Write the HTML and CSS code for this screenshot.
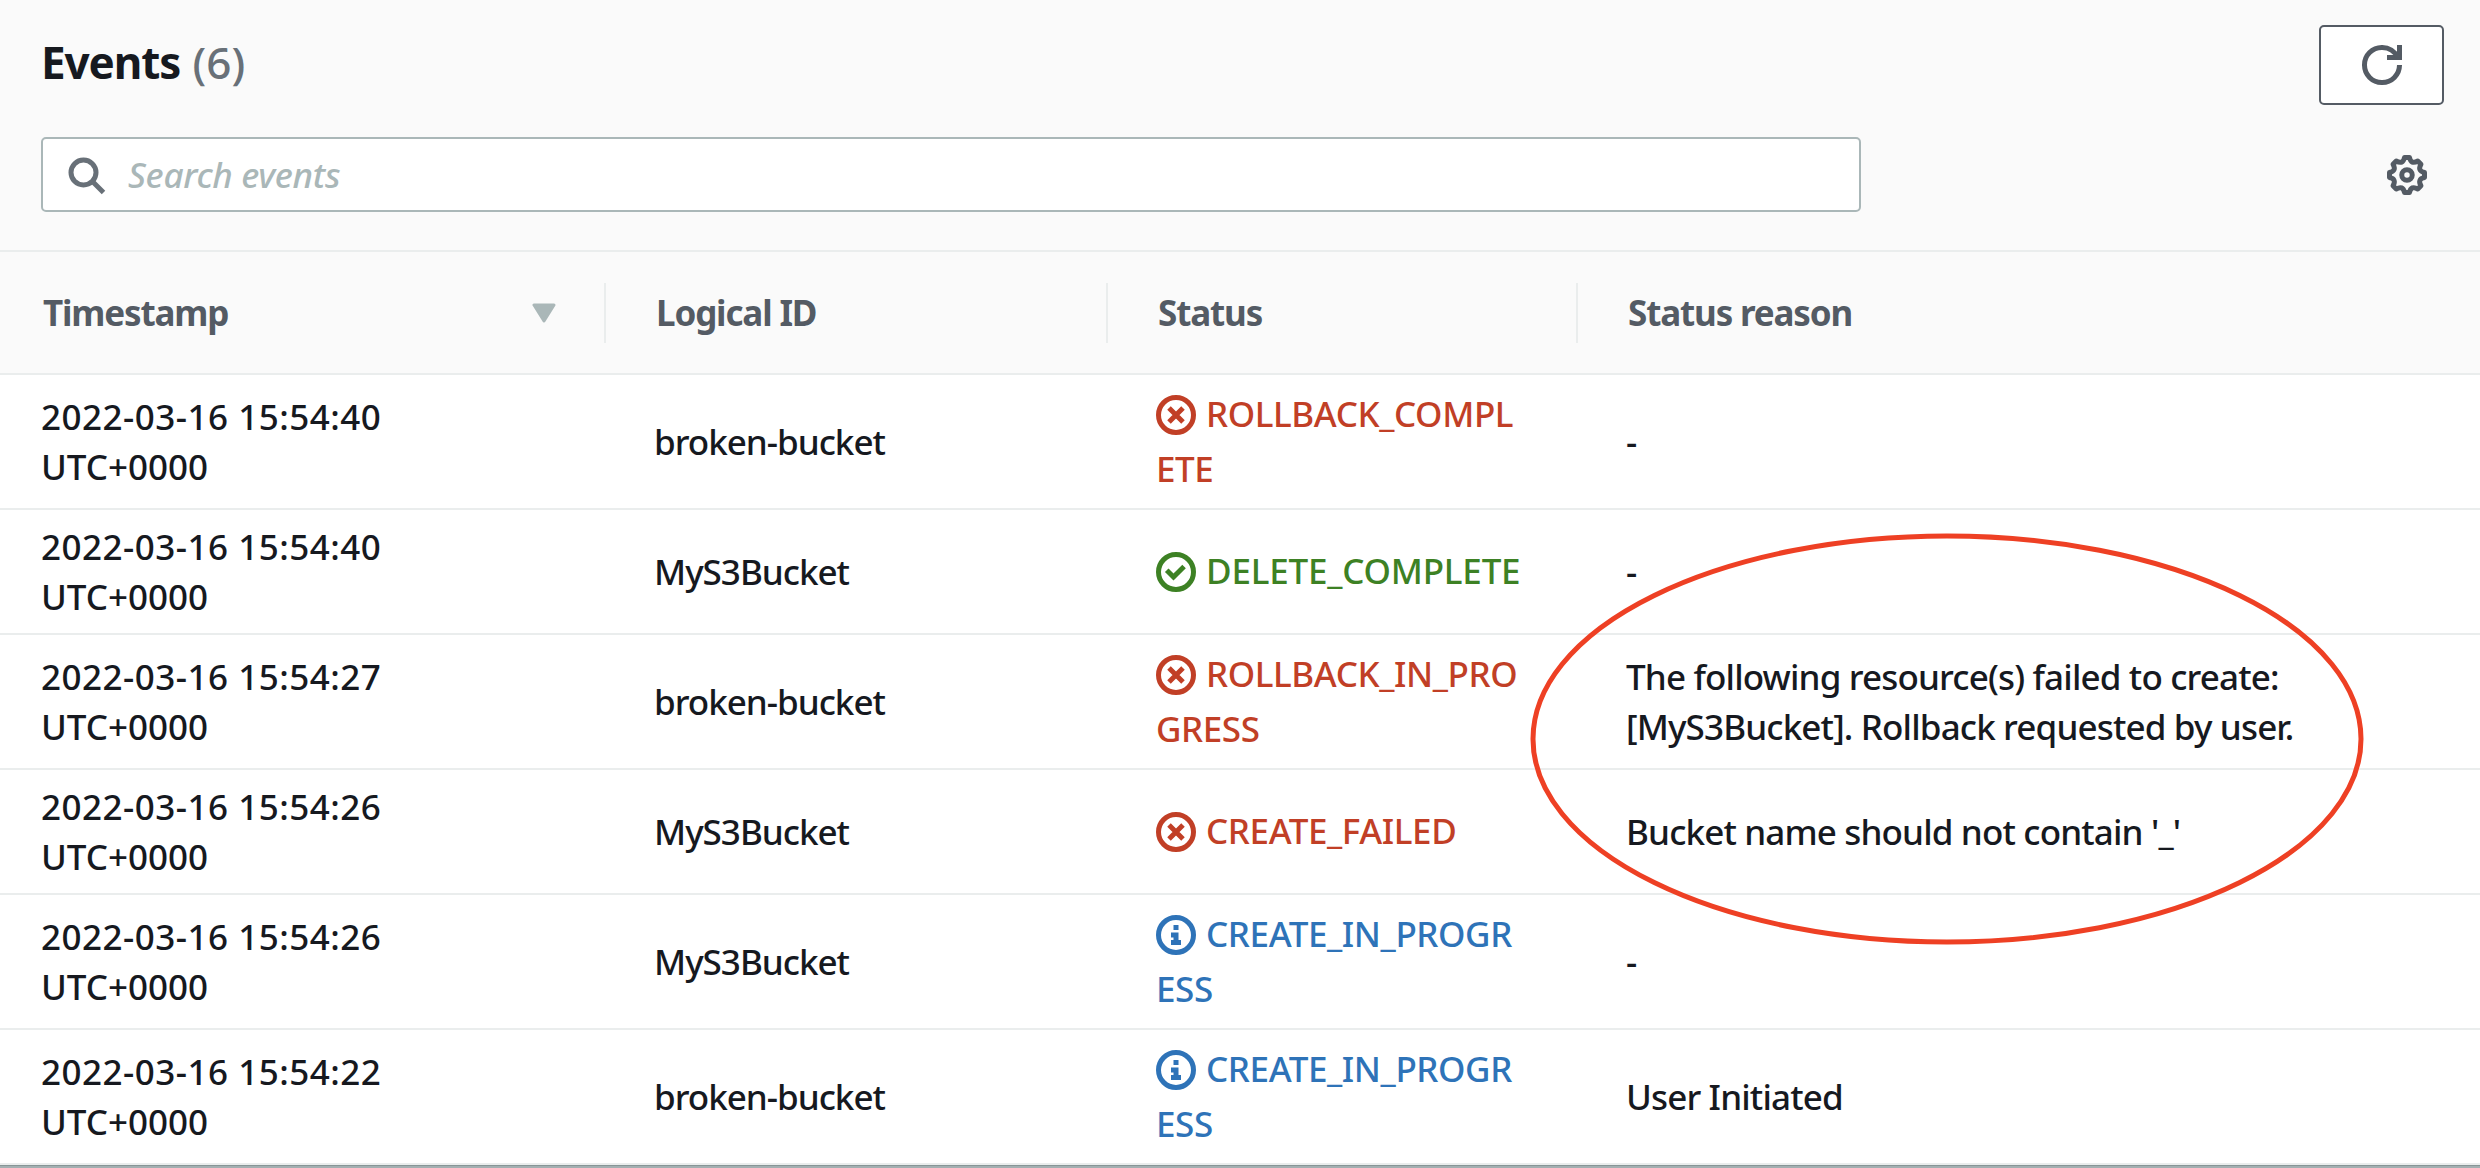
FILE: index.html
```html
<!DOCTYPE html>
<html lang="en">
<head>
<meta charset="utf-8">
<title>Events</title>
<link rel="stylesheet" href="styles.css">
</head>
<body>
<svg class="sprite" aria-hidden="true">
  <symbol id="icon-error" viewBox="0 0 16 16"><circle cx="8" cy="8" r="7"/><path d="M10.8 5.2 5.2 10.8M10.8 10.8 5.2 5.2"/></symbol>
  <symbol id="icon-success" viewBox="0 0 16 16"><circle cx="8" cy="8" r="7"/><path stroke-linecap="square" d="m5 8 2 2 3.521-3.521"/></symbol>
  <symbol id="icon-info" viewBox="0 0 16 16"><circle cx="8" cy="8" r="7"/><path d="M8 11V8H6M10 11H6M8 6V4"/></symbol>
</svg>
<main class="panel">
  <header class="panel-header">
    <div class="title-row">
      <h1 class="title">Events <span class="counter">(6)</span></h1>
      <button class="refresh" aria-label="Refresh">
        <svg class="icon" viewBox="0 0 16 16"><path d="M10 5h5V0"/><path d="M15 8a6.957 6.957 0 0 1-7 7 6.957 6.957 0 0 1-7-7 6.957 6.957 0 0 1 7-7 6.87 6.87 0 0 1 6.3 4"/></svg>
      </button>
    </div>
    <div class="tools-row">
      <label class="search">
        <svg class="icon" viewBox="0 0 16 16"><circle cx="7" cy="7" r="5"/><path d="m15 15-4.5-4.5"/></svg>
        <span class="placeholder">Search events</span>
      </label>
      <svg class="icon gear" viewBox="0 0 16 16"><circle cx="8" cy="8" r="2.1"/><path stroke-linejoin="round" d="M7 1H9Q9.63 3.96 12.31 2.41L13.59 3.69Q12.04 6.37 15 7V9Q12.04 9.63 13.59 12.31L12.31 13.59Q9.63 12.04 9 15H7Q6.37 12.04 3.69 13.59L2.41 12.31Q3.96 9.63 1 9V7Q3.96 6.37 2.41 3.69L3.69 2.41Q6.37 3.96 7 1Z"/></svg>
    </div>
  </header>
  <section class="table">
    <div class="row head">
      <div class="cell">Timestamp<svg class="sort" viewBox="0 0 26 20"><path d="M3 2h20L13 18z"/></svg></div>
      <div class="cell">Logical ID</div>
      <div class="cell">Status</div>
      <div class="cell">Status reason</div>
    </div>
    <div class="row">
      <div class="cell time"><span class="date">2022-03-16 15:54:40</span><br>UTC+0000</div>
      <div class="cell name">broken-bucket</div>
      <div class="cell status error"><div><svg class="icon"><use href="#icon-error"/></svg>ROLLBACK_COMPL<br>ETE</div></div>
      <div class="cell reason">-</div>
    </div>
    <div class="row short">
      <div class="cell time"><span class="date">2022-03-16 15:54:40</span><br>UTC+0000</div>
      <div class="cell name">MyS3Bucket</div>
      <div class="cell status success"><div><svg class="icon"><use href="#icon-success"/></svg>DELETE_COMPLETE</div></div>
      <div class="cell reason">-</div>
    </div>
    <div class="row">
      <div class="cell time"><span class="date">2022-03-16 15:54:27</span><br>UTC+0000</div>
      <div class="cell name">broken-bucket</div>
      <div class="cell status error"><div><svg class="icon"><use href="#icon-error"/></svg>ROLLBACK_IN_PRO<br>GRESS</div></div>
      <div class="cell reason">The following resource(s) failed to create:<br>[MyS3Bucket]. Rollback requested by user.</div>
    </div>
    <div class="row short">
      <div class="cell time"><span class="date">2022-03-16 15:54:26</span><br>UTC+0000</div>
      <div class="cell name">MyS3Bucket</div>
      <div class="cell status error"><div><svg class="icon"><use href="#icon-error"/></svg>CREATE_FAILED</div></div>
      <div class="cell reason">Bucket name should not contain '_'</div>
    </div>
    <div class="row">
      <div class="cell time"><span class="date">2022-03-16 15:54:26</span><br>UTC+0000</div>
      <div class="cell name">MyS3Bucket</div>
      <div class="cell status info"><div><svg class="icon"><use href="#icon-info"/></svg>CREATE_IN_PROGR<br>ESS</div></div>
      <div class="cell reason">-</div>
    </div>
    <div class="row">
      <div class="cell time"><span class="date">2022-03-16 15:54:22</span><br>UTC+0000</div>
      <div class="cell name">broken-bucket</div>
      <div class="cell status info"><div><svg class="icon"><use href="#icon-info"/></svg>CREATE_IN_PROGR<br>ESS</div></div>
      <div class="cell reason">User Initiated</div>
    </div>
  </section>
  <svg class="highlight" viewBox="0 0 834 412"><ellipse cx="417" cy="206" rx="414" ry="203"/></svg>
</main>
</body>
</html>
```
FILE: styles.css
```css
* { box-sizing: border-box; }
body {
  margin: 0;
  background: #fff;
  color: #16191f;
  font: 500 35px/50px "Noto Sans", "Open Sans", sans-serif;
}
.sprite { position: absolute; width: 0; height: 0; }
.panel {
  position: relative;
  height: 1168px;
  overflow: hidden;
  border-bottom: 2px solid #a3afb1;
}
.icon {
  width: 40px;
  height: 40px;
  flex: none;
  fill: none;
  stroke: currentColor;
  stroke-width: 2;
}
.panel-header {
  height: 252px;
  padding: 25px 36px 0 41px;
  background: #fafafa;
  border-bottom: 2px solid #eaeded;
}
.title-row, .tools-row { display: flex; justify-content: space-between; }
.title { margin: 7px 0 0; font-size: 44px; line-height: 60px; font-weight: 700; letter-spacing: -1.1px; }
.counter { margin-left: 2px; font-weight: 500; letter-spacing: 0; color: #687078; }
.refresh {
  display: flex;
  align-items: center;
  justify-content: center;
  width: 125px;
  height: 80px;
  padding: 0;
  color: #545b64;
  background: #fff;
  border: 2px solid #545b64;
  border-radius: 5px;
}
.tools-row { align-items: center; margin-top: 32px; padding-right: 17px; }
.search {
  display: flex;
  align-items: center;
  width: 1820px;
  height: 75px;
  padding-left: 23px;
  gap: 22px;
  background: #fff;
  border: 2px solid #aab7b8;
  border-radius: 5px;
  color: #687078;
}
.placeholder { color: #aab7b8; font-style: italic; font-weight: 500; letter-spacing: -0.3px; }
.gear { color: #545b64; }
.table { border-bottom: 1px solid #879596; }
.row {
  display: grid;
  grid-template-columns: 606px 502px 470px 1fr;
  align-items: center;
  height: 135px;
  border-bottom: 2px solid #eaeded;
}
.short { height: 125px; }
.cell { padding-left: 48px; white-space: nowrap; }
.cell:first-child { padding-left: 41px; }
.head { height: 123px; background: #fafafa; color: #545b64; font-weight: 700; letter-spacing: -1.15px; }
.head .cell {
  display: flex;
  align-items: center;
  justify-content: space-between;
  height: 60px;
  padding-left: 50px;
  padding-right: 47px;
  border-right: 2px solid #eaeded;
}
.head .cell:first-child { padding-left: 43px; }
.head .cell:last-child { border-right: 0; }
.sort { width: 26px; height: 20px; fill: #aab7b8; stroke: #aab7b8; stroke-width: 3; stroke-linejoin: round; }
.date { letter-spacing: 0.5px; }
.name { letter-spacing: -1px; }
.reason { letter-spacing: -0.85px; }
.status { padding-bottom: 2px; line-height: 55px; letter-spacing: -0.4px; }
.status .icon { margin-right: 10px; vertical-align: -8px; }
.error { color: #c13f26; }
.success { color: #3d8124; letter-spacing: -0.2px; }
.info { color: #2e73b8; }
.highlight {
  position: absolute;
  left: 1530px;
  top: 533px;
  width: 834px;
  height: 412px;
  fill: none;
  stroke: #ee4024;
  stroke-width: 5;
}
```
